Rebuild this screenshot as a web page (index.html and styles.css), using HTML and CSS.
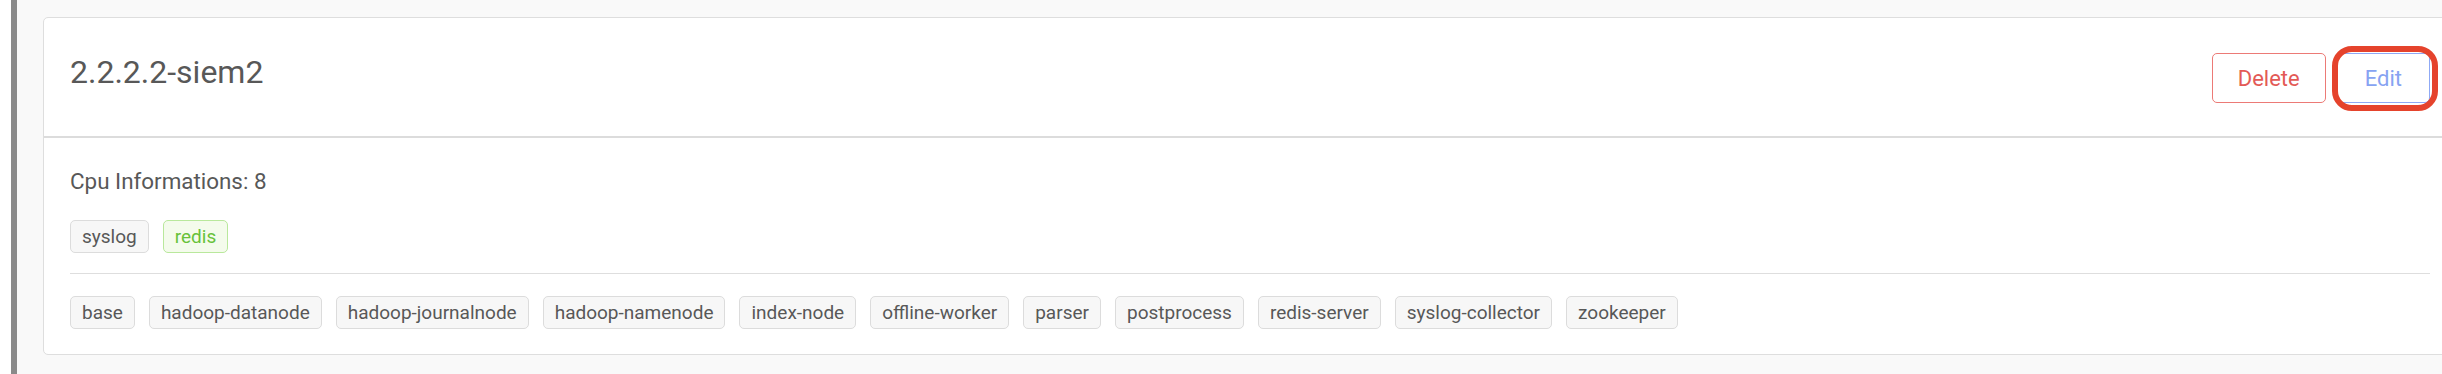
FILE: index.html
```html
<!DOCTYPE html>
<html lang="en">
<head>
<meta charset="utf-8">
<title>Node 2.2.2.2-siem2</title>
<link rel="stylesheet" href="styles.css">
</head>
<body>
<div class="page">
  <div class="panel">
    <div class="card">
      <div class="card-head">
        <h2 class="title">2.2.2.2-siem2</h2>
        <div class="actions">
          <button class="btn btn-danger">Delete</button>
          <button class="btn btn-primary highlighted">Edit</button>
        </div>
      </div>
      <div class="card-body">
        <p class="cpu">Cpu Informations: 8</p>
        <div class="tags tags-services">
          <span class="tag">syslog</span>
          <span class="tag tag-success">redis</span>
        </div>
        <hr class="divider">
        <div class="tags tags-roles">
          <span class="tag">base</span>
          <span class="tag">hadoop-datanode</span>
          <span class="tag">hadoop-journalnode</span>
          <span class="tag">hadoop-namenode</span>
          <span class="tag">index-node</span>
          <span class="tag">offline-worker</span>
          <span class="tag">parser</span>
          <span class="tag">postprocess</span>
          <span class="tag">redis-server</span>
          <span class="tag">syslog-collector</span>
          <span class="tag">zookeeper</span>
        </div>
      </div>
    </div>
  </div>
</div>
</body>
</html>
```

FILE: styles.css
```css
html, body {
  margin: 0;
  padding: 0;
  height: 374px;
  overflow: hidden;
  background: #f9f9f9;
  font-family: Roboto, "Liberation Sans", Arial, sans-serif;
  color: #5a5a5a;
}

.page {
  display: flex;
  height: 374px;
  padding-left: 11px;
  background: #ffffff;
  box-sizing: border-box;
}

.panel {
  flex: 1;
  display: flex;
  align-items: flex-start;
  background: #f9f9f9;
  border-left: 6px solid #8a8a8a;
  padding: 17px 0 0 26px;
  min-width: 0;
}

.card {
  flex: none;
  width: 2412px;
  background: #fff;
  border: 1px solid #dedede;
  border-radius: 5px;
}

.card-head {
  display: flex;
  justify-content: space-between;
  align-items: flex-start;
  padding: 35px 26px 33px;
  border-bottom: 2px solid #dcdcdc;
}

.title {
  margin: 0;
  font-size: 32px;
  font-weight: 400;
  line-height: normal;
  color: #585858;
}

.actions {
  display: flex;
  gap: 11px;
}

.btn {
  height: 50px;
  padding: 0 25px;
  font-family: Roboto, "Liberation Sans", Arial, sans-serif;
  font-size: 22px;
  background: #fff;
  border: 1px solid;
  border-radius: 5px;
  cursor: pointer;
}

.btn-danger {
  color: #e35a56;
  border-color: #ec7a76;
}

.btn-primary {
  color: #87a3f2;
  border-color: #8fa9f5;
  padding: 0 27px;
}

.highlighted {
  position: relative;
}

.highlighted::after {
  content: "";
  position: absolute;
  left: -6px;
  top: -8px;
  right: -9px;
  bottom: -9px;
  border: 6px solid #e5432c;
  border-radius: 20px;
  pointer-events: none;
}

.card-body {
  padding: 30px 26px 25px;
}

.cpu {
  margin: 0 0 26px;
  font-size: 22.4px;
  line-height: normal;
  color: #585858;
}

.tags {
  display: flex;
  gap: 14px;
}

.tag {
  display: inline-flex;
  align-items: center;
  height: 33px;
  box-sizing: border-box;
  padding: 0 11px;
  font-size: 19px;
  color: #585858;
  background: #f7f7f7;
  border: 1px solid #dcdcdc;
  border-radius: 5px;
  white-space: nowrap;
}

.tag-success {
  color: #67c23a;
  background: #f4fbec;
  border-color: #b9e89c;
}

.divider {
  margin: 20px 0 22px;
  border: 0;
  border-top: 1px solid #dedede;
  height: 0;
}
```
